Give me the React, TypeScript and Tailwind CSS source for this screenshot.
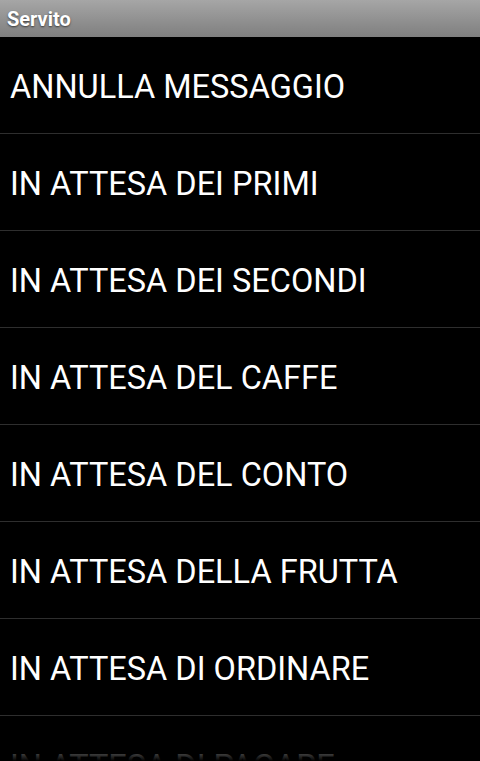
import React from 'react';

const items = [
  'ANNULLA MESSAGGIO',
  'IN ATTESA DEI PRIMI',
  'IN ATTESA DEI SECONDI',
  'IN ATTESA DEL CAFFE',
  'IN ATTESA DEL CONTO',
  'IN ATTESA DELLA FRUTTA',
  'IN ATTESA DI ORDINARE',
  'IN ATTESA DI PAGARE',
];

const App: React.FC = () => {
  return (
    <div className="h-[761px] w-[480px] overflow-hidden bg-black font-['Roboto',sans-serif] flex flex-col">
      <div className="h-[37px] shrink-0 flex items-center px-[7px] bg-gradient-to-b from-[#a6a6a6] to-[#7f7f7f]">
        <span className="text-[20px] font-bold text-white [text-shadow:0_1px_2px_rgba(0,0,0,0.6)]">Servito</span>
      </div>
      <div className="relative flex-1 overflow-hidden">
        <ul>
          {items.map((item, i) => (
            <li
              key={item}
              className={`h-[97px] flex items-center pl-[10px] pt-[5px] text-[32.5px] text-white ${i < items.length - 1 ? 'border-b border-[#2e2e2e]' : ''}`}
            >
              {item}
            </li>
          ))}
        </ul>
        <div className="pointer-events-none absolute bottom-0 left-0 right-0 h-[30px] bg-gradient-to-b from-transparent to-black" />
      </div>
    </div>
  );
};

export default App;
